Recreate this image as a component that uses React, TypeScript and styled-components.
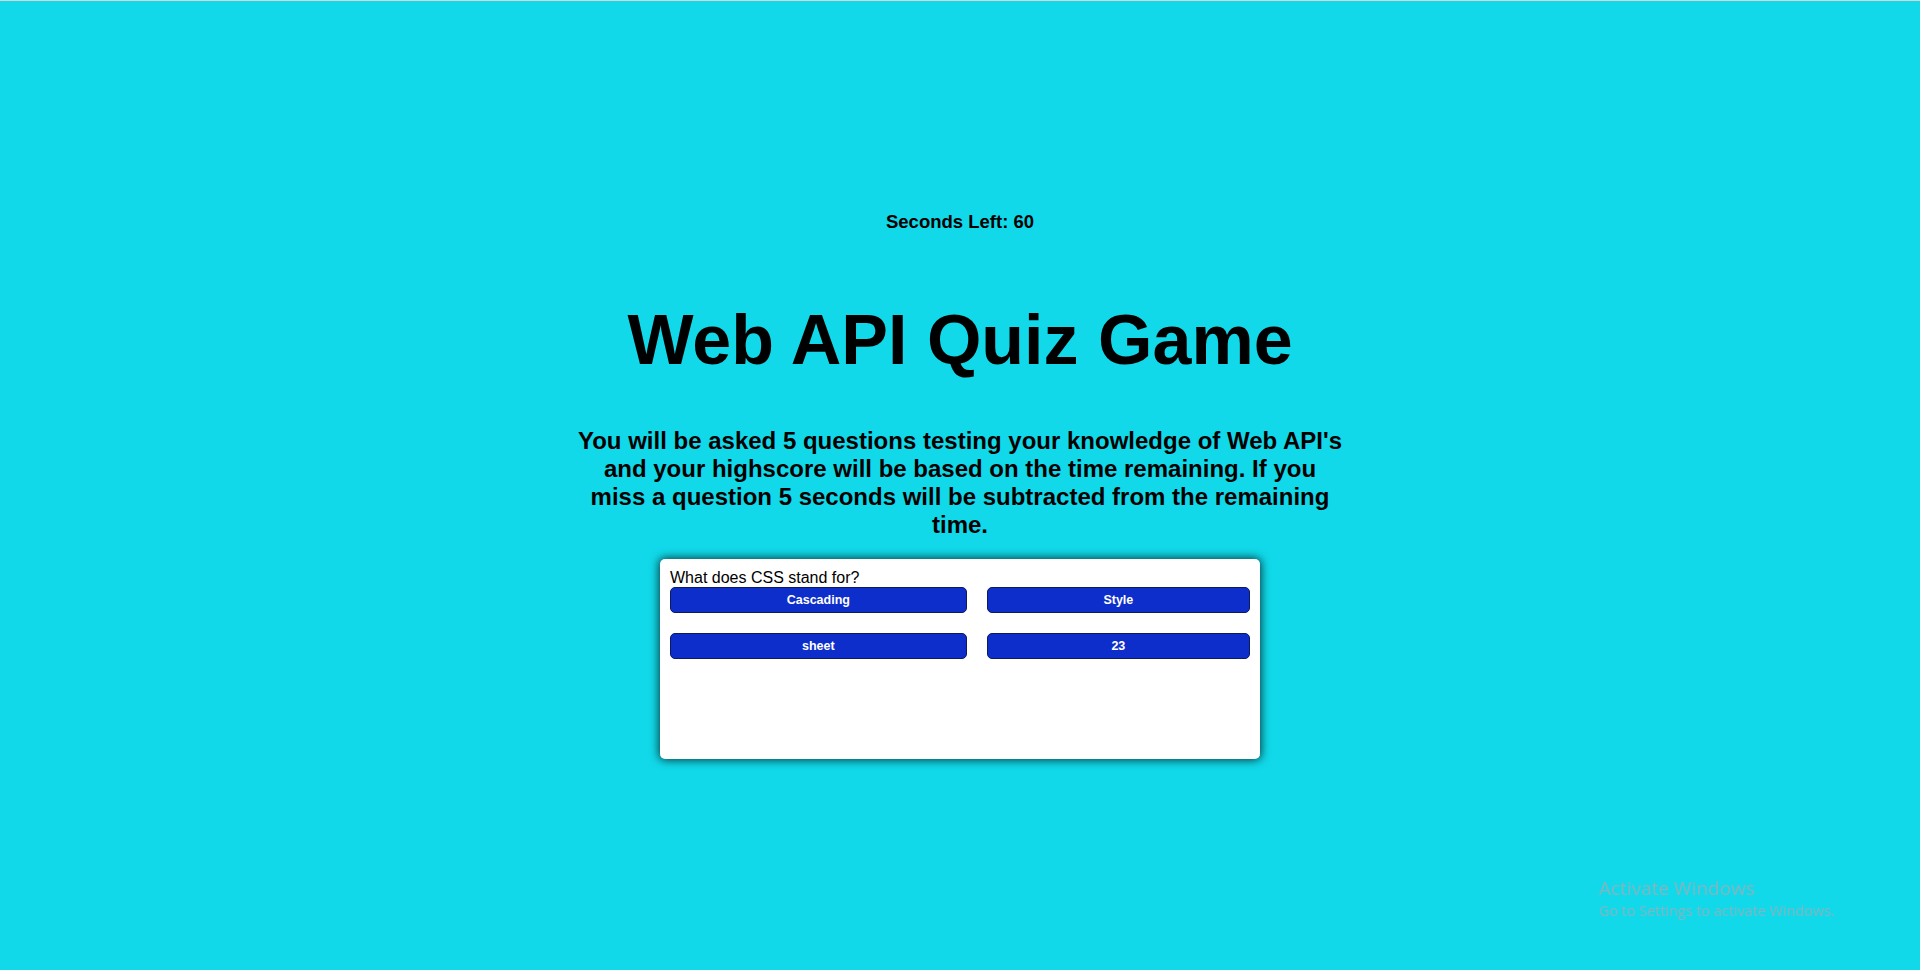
import React from "react";
import styled, { createGlobalStyle } from "styled-components";

const GlobalStyle = createGlobalStyle`
  html, body {
    margin: 0;
    padding: 0;
  }
  body {
    background: #11d9e9;
    font-family: "Liberation Sans", Arial, sans-serif;
    color: #000;
  }
`;

const Page = styled.main`
  min-height: 970px;
  box-sizing: border-box;
  border-top: 1px solid #d6d6d6;
  background: #11d9e9;
  display: flex;
  flex-direction: column;
  align-items: center;
  padding-top: 210px;
`;

const Timer = styled.div`
  font-size: 18.5px;
  font-weight: bold;
  text-align: center;
`;

const Title = styled.h1`
  margin: 67px 0 0;
  font-size: 70px;
  font-weight: bold;
  line-height: normal;
  text-align: center;
`;

const Intro = styled.p`
  margin: 47px 0 0;
  width: 40%;
  font-size: 24px;
  font-weight: bold;
  line-height: normal;
  text-align: center;
`;

const Card = styled.section`
  margin-top: 20px;
  width: 600px;
  height: 200px;
  box-sizing: border-box;
  padding: 10px;
  background: #ffffff;
  border-radius: 5px;
  box-shadow: 0 0 10px 1px rgba(0, 0, 0, 0.75);
`;

const Question = styled.div`
  font-size: 16px;
  line-height: normal;
`;

const Answers = styled.div`
  display: grid;
  grid-template-columns: auto auto;
  column-gap: 20px;
  row-gap: 20px;
`;

const AnswerButton = styled.button`
  box-sizing: border-box;
  height: 26px;
  padding: 4px 6px;
  border: 1px solid #0a1b5e;
  border-radius: 5px;
  background: #0d2ecb;
  color: #ffffff;
  font-family: "Liberation Sans", Arial, sans-serif;
  font-size: 12.5px;
  font-weight: bold;
  line-height: 16px;
  text-align: center;
  cursor: pointer;
`;

const Watermark = styled.div`
  position: fixed;
  left: 1599px;
  top: 875px;
  color: #82b5c0;
  font-family: "Open Sans", "Noto Sans", sans-serif;
  pointer-events: none;
`;

const WatermarkTitle = styled.div`
  font-size: 19px;
  line-height: 26px;
`;

const WatermarkSub = styled.div`
  font-size: 14.4px;
  line-height: 19px;
`;

const answers = ["Cascading", "Style", "sheet", "23"];

export default function App() {
  return (
    <>
      <GlobalStyle />
      <Page>
        <Timer>Seconds Left: 60</Timer>
        <Title>Web API Quiz Game</Title>
        <Intro>
          You will be asked 5 questions testing your knowledge of Web API's and
          your highscore will be based on the time remaining. If you miss a
          question 5 seconds will be subtracted from the remaining time.
        </Intro>
        <Card>
          <Question>What does CSS stand for?</Question>
          <Answers>
            {answers.map((a) => (
              <AnswerButton key={a}>{a}</AnswerButton>
            ))}
          </Answers>
        </Card>
      </Page>
      <Watermark>
        <WatermarkTitle>Activate Windows</WatermarkTitle>
        <WatermarkSub>Go to Settings to activate Windows.</WatermarkSub>
      </Watermark>
    </>
  );
}
